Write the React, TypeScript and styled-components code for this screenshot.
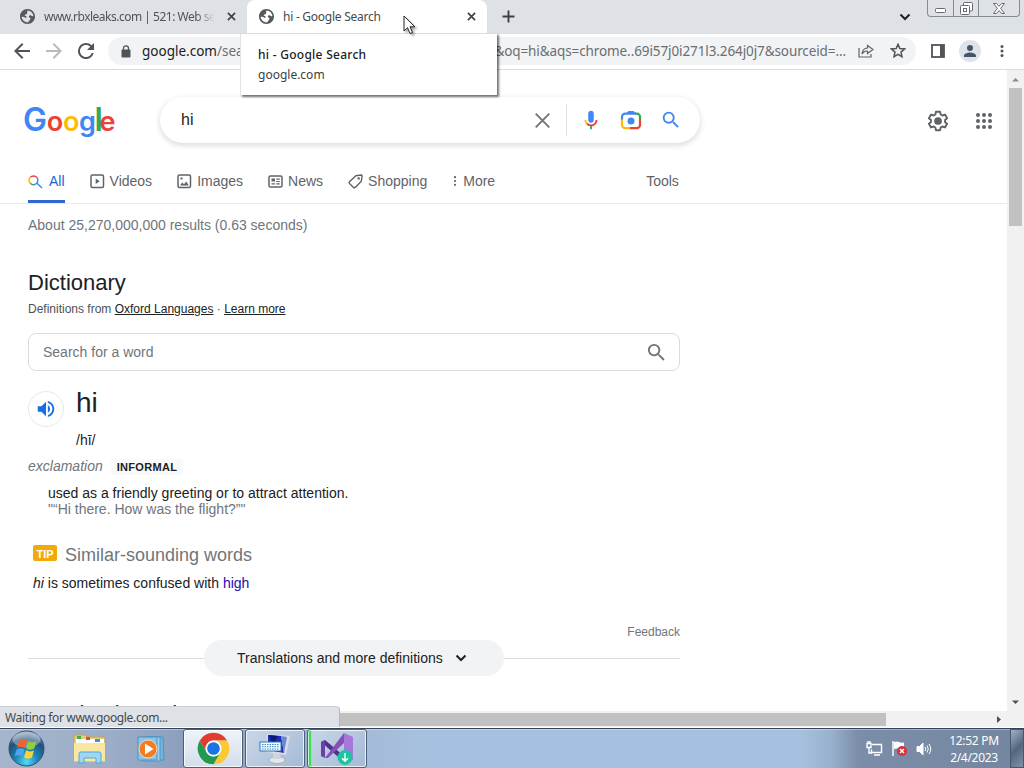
import React from "react";
import styled, { createGlobalStyle } from "styled-components";

const uiFont = `"Noto Sans", "Open Sans", sans-serif`;
const pageFont = `"Liberation Sans", Arial, sans-serif`;

const GlobalStyle = createGlobalStyle`
  * {
    box-sizing: border-box;
  }
  body {
    margin: 0;
    overflow: hidden;
    font-family: ${pageFont};
  }
  svg {
    display: block;
    flex-shrink: 0;
  }
`;

const Screen = styled.div`
  position: relative;
  display: flex;
  flex-direction: column;
  width: 1024px;
  height: 768px;
  overflow: hidden;
  background-color: #fff;
`;

/* ------------- tab strip */

const TabStrip = styled.div`
  display: flex;
  height: 34px;
  padding-left: 8px;
  background-color: #dee1e6;
  font-family: ${uiFont};
`;

const Tab = styled.div<{ $active?: boolean; $width: number }>`
  display: flex;
  align-items: center;
  width: ${(p) => p.$width}px;
  padding: 0 11px 0 12px;
  border-radius: 8px 8px 0 0;
  background-color: ${(p) => (p.$active ? "#fff" : "transparent")};
  color: ${(p) => (p.$active ? "#45494d" : "#50545a")};
`;

const TabTitle = styled.div<{ $fade?: boolean; $spacing: number }>`
  flex: 1;
  margin: 0 9px 0 9px;
  overflow: hidden;
  white-space: nowrap;
  font-size: 12px;
  line-height: 18px;
  letter-spacing: ${(p) => p.$spacing}px;
  mask-image: ${(p) =>
    p.$fade ? "linear-gradient(90deg, #000 88%, transparent 98%)" : "none"};
`;

const NewTab = styled.div`
  padding: 10px 0 0 15px;
`;

const StripRight = styled.div`
  display: flex;
  margin-left: auto;
  padding-right: 4px;
`;

const TabSearch = styled.div`
  padding: 13px 16px 0 0;
`;

const WindowButtons = styled.div`
  display: flex;
  height: 17px;
  border: 1px solid #868b92;
  border-top: none;
  border-radius: 0 0 4px 4px;
`;

const WindowButton = styled.div<{ $width: number }>`
  display: flex;
  align-items: center;
  justify-content: center;
  width: ${(p) => p.$width}px;
  & + & {
    border-left: 1px solid #868b92;
  }
`;

/* ------------- toolbar */

const Toolbar = styled.div`
  display: flex;
  align-items: center;
  height: 37px;
  padding: 0 14px;
  border-bottom: 1px solid #dadce0;
  background-color: #fff;
  font-family: ${uiFont};
`;

const NavIcons = styled.div`
  display: flex;
  gap: 16px;
`;

const AddressBar = styled.div`
  display: flex;
  align-items: center;
  width: 808px;
  height: 28px;
  margin-left: 14px;
  padding: 0 10px 0 13px;
  border-radius: 14px;
  background-color: #f1f3f4;
`;

const Url = styled.div`
  display: flex;
  justify-content: space-between;
  flex: 1;
  margin: 0 12px 0 11px;
  white-space: nowrap;
  font-size: 13.5px;
  color: #6a6e73;
`;

const UrlStart = styled.div`
  letter-spacing: 0;
  span {
    color: #202124;
  }
`;

const UrlEnd = styled.div`
  letter-spacing: -0.1px;
`;

const BarIcons = styled.div`
  display: flex;
  align-items: center;
  gap: 16px;
`;

const ToolbarRight = styled.div`
  display: flex;
  align-items: center;
  gap: 14px;
  padding-left: 15px;
`;

const Avatar = styled.div`
  display: flex;
  align-items: center;
  justify-content: center;
  width: 22px;
  height: 22px;
  margin-right: 5px;
  border-radius: 50%;
  background-color: #dee2ea;
`;

/* ------------- viewport and scrollbars */

const ViewportRow = styled.div`
  display: flex;
  height: 641px;
`;

const Page = styled.div`
  flex: 1;
  padding-top: 1px;
  overflow: hidden;
  background-color: #fff;
`;

const VScroll = styled.div`
  display: flex;
  flex-direction: column;
  align-items: center;
  width: 17px;
  padding-top: 1px;
  background-color: #f1f1f1;
`;

const VThumb = styled.div`
  width: 13px;
  height: 138px;
  background-color: #c1c1c1;
`;

const HScroll = styled.div`
  display: flex;
  align-items: center;
  height: 16px;
  background-color: #f1f1f1;
`;

const HThumb = styled.div`
  width: 869px;
  height: 13px;
  margin-left: 17px;
  background-color: #c1c1c1;
`;

const ArrowBox = styled.div<{ $end?: boolean }>`
  display: flex;
  align-items: center;
  justify-content: center;
  width: 17px;
  height: 17px;
  margin-top: ${(p) => (p.$end ? "auto" : "0")};
`;

const HArrow = styled.div`
  width: 7px;
  margin: 0 22px 0 auto;
`;

/* ------------- search header */

const SearchHeader = styled.div`
  display: flex;
  height: 88px;
  padding: 26px 14px 0 20px;
`;

const SearchBox = styled.div`
  display: flex;
  align-items: center;
  width: 540px;
  height: 46px;
  margin-left: 40px;
  padding: 0 18px 0 21px;
  border-radius: 24px;
  box-shadow: 0 2px 5px 1px rgba(64, 60, 67, 0.16);
`;

const Query = styled.div`
  flex: 1;
  font-size: 16px;
  line-height: 22px;
  color: #222;
`;

const Divider = styled.div`
  width: 1px;
  height: 32px;
  margin: 0 13px 0 15px;
  background-color: #dfe1e5;
`;

const SearchIcons = styled.div`
  display: flex;
  align-items: center;
  gap: 18px;
`;

const HeaderTools = styled.div`
  display: flex;
  align-items: center;
  gap: 26px;
  height: 46px;
  margin-left: auto;
  padding-top: 2px;
`;

const TabsNav = styled.div`
  display: flex;
  height: 45px;
  padding-left: 28px;
  border-bottom: 1px solid #ebebeb;
  font-size: 14px;
`;

const NavItem = styled.div<{ $active?: boolean; $left: number; $gap?: number }>`
  display: flex;
  align-items: center;
  gap: ${(p) => p.$gap ?? 5}px;
  height: 44px;
  padding-top: ${(p) => (p.$active ? 3 : 0)}px;
  margin-left: ${(p) => p.$left}px;
  border-bottom: ${(p) => (p.$active ? "3px solid #2f66cf" : "none")};
  color: ${(p) => (p.$active ? "#1a67d2" : "#5f6368")};
`;

const Stats = styled.div`
  padding-left: 28px;
  font-size: 14px;
  line-height: 43px;
  color: #70757a;
`;

/* ------------- dictionary card */

const Card = styled.div`
  width: 652px;
  margin: 22px 0 0 28px;
  color: #202124;
`;

const Heading = styled.div`
  font-size: 22px;
  line-height: 28px;
`;

const Source = styled.div`
  margin-top: 2px;
  font-size: 12px;
  line-height: 20px;
  color: #4d5156;
  span {
    color: #202124;
    text-decoration: underline;
  }
`;

const WordSearch = styled.div`
  display: flex;
  align-items: center;
  justify-content: space-between;
  height: 38px;
  margin-top: 14px;
  padding: 0 11px 0 14px;
  border: 1px solid #dadce0;
  border-radius: 8px;
  font-size: 14px;
  color: #70757a;
`;

const WordRow = styled.div`
  display: flex;
  margin-top: 17px;
`;

const SpeakerButton = styled.div`
  display: flex;
  align-items: center;
  justify-content: center;
  width: 36px;
  height: 36px;
  margin: 3px 12px 0 0;
  border: 1px solid #e6e8eb;
  border-radius: 50%;
`;

const Word = styled.div`
  font-size: 28px;
  line-height: 30px;
`;

const Phonetic = styled.div`
  margin-top: 14px;
  font-size: 14px;
  line-height: 16px;
`;

const PartOfSpeech = styled.div`
  display: flex;
  align-items: center;
  height: 20px;
  margin-top: 8px;
  font-size: 14px;
  font-style: italic;
  color: #70757a;
`;

const Label = styled.div`
  margin: 2px 0 0 8px;
  padding: 2px 6px;
  border-radius: 3px;
  background-color: #f8f9fa;
  font-size: 11px;
  font-style: normal;
  font-weight: bold;
  letter-spacing: 0.3px;
  color: #202124;
`;

const Definition = styled.div`
  margin: 9px 0 0 20px;
  font-size: 14px;
  line-height: 16px;
`;

const Example = styled.div`
  color: #70757a;
`;

const TipRow = styled.div`
  display: flex;
  align-items: center;
  height: 24px;
  margin: 26px 0 0 5px;
  font-size: 18px;
  color: #70757a;
`;

const Tip = styled.div`
  width: 24px;
  height: 16px;
  margin: -5px 8px 0 0;
  border-radius: 2px;
  background-color: #f2a90a;
  font-size: 11px;
  font-weight: bold;
  line-height: 19px;
  text-align: center;
  color: #fff;
`;

const Confused = styled.div`
  margin: 8px 0 0 5px;
  font-size: 14px;
  line-height: 16px;
  span {
    color: #1a0dab;
  }
`;

const Feedback = styled.div`
  margin-top: 34px;
  font-size: 12px;
  line-height: 15px;
  text-align: right;
  color: #70757a;
`;

const MoreRow = styled.div`
  display: flex;
  align-items: center;
  height: 36px;
  &::before,
  &::after {
    content: "";
    flex: 1;
    height: 1px;
    background-color: #dadce0;
  }
`;

const MoreButton = styled.div`
  display: flex;
  align-items: center;
  gap: 12px;
  width: 300px;
  height: 36px;
  padding-left: 33px;
  border-radius: 18px;
  background-color: #f1f3f4;
  font-size: 14px;
`;

const NextHeading = styled(Heading)`
  margin-top: 24px;
`;

/* ------------- overlays */

const TabTooltip = styled.div`
  position: absolute;
  top: 33px;
  left: 240px;
  width: 257px;
  height: 62px;
  padding: 11px 17px;
  border-top: 1px solid #dadce0;
  border-left: 1px solid #e3e3e3;
  background-color: #fff;
  box-shadow: 2px 2px 2px rgba(0, 0, 0, 0.55);
  font-family: ${uiFont};
  font-size: 12px;
  line-height: 20px;
  color: #3c4043;
`;

const TooltipTitle = styled.div`
  font-weight: 500;
  letter-spacing: 0.27px;
  color: #202124;
`;

const StatusBubble = styled.div`
  position: absolute;
  left: 0;
  top: 706px;
  width: 340px;
  height: 21px;
  padding-left: 5px;
  border-top: 1px solid #ccd0d6;
  border-right: 1px solid #b4b8be;
  border-radius: 0 4px 0 0;
  background-color: #dee1e6;
  font-family: ${uiFont};
  font-size: 12px;
  line-height: 22px;
  letter-spacing: -0.35px;
  color: #45494e;
`;

const Cursor = styled.svg`
  position: absolute;
  left: 403px;
  top: 15px;
  filter: drop-shadow(2px 2px 1px rgba(0, 0, 0, 0.35));
`;

/* ------------- taskbar */

const Taskbar = styled.div`
  display: flex;
  height: 41px;
  padding-top: 1px;
  border-top: 1px solid #fff;
  background: linear-gradient(
    90deg,
    #a5b5cb 0,
    #9badc8 110px,
    #8c9fbc 182px,
    #a4bad8 366px,
    #a6c1df 420px,
    #a6c1df 800px,
    #98b0ce 832px,
    #7b8da8 858px,
    #74869f 1024px
  );
  box-shadow: inset 0 1px 0 #34435a, inset 0 2px 0 rgba(255, 255, 255, 0.35);
`;

const PinnedApps = styled.div`
  display: flex;
  align-items: center;
  width: 183px;
  padding-left: 8px;
`;

const PinnedIcon = styled.div<{ $left: number }>`
  margin-left: ${(p) => p.$left}px;
`;

const TaskButton = styled.div<{ $bright?: boolean; $busy?: boolean }>`
  display: flex;
  align-items: center;
  justify-content: center;
  width: 60px;
  height: 39px;
  margin-right: 2px;
  border: 1px solid #4c5f7b;
  border-radius: 3px;
  background: ${(p) =>
    p.$bright
      ? "linear-gradient(#eef3f9, #d3deec)"
      : "linear-gradient(135deg, #c9d7e8, #a5bad6)"};
  box-shadow: inset 0 0 0 1px rgba(255, 255, 255, 0.75)
    ${(p) => (p.$busy ? ", inset 3px 0 1px #2fe04a" : "")};
`;

const Tray = styled.div`
  display: flex;
  align-items: center;
  margin-left: auto;
  color: #fff;
`;

const TrayIcons = styled.div`
  display: flex;
  align-items: center;
  gap: 8px;
`;

const Clock = styled.div`
  width: 56px;
  margin: 0 8px 0 14px;
  font-family: ${uiFont};
  font-size: 12px;
  line-height: 17px;
  letter-spacing: -0.3px;
  text-align: center;
  white-space: nowrap;
`;

const ShowDesktop = styled.div`
  width: 14px;
  height: 39px;
  border: 1px solid #45566f;
  background: linear-gradient(135deg, #a3b2c8, #54657f 50%, #7f90a8);
`;

/* ------------- icons */

const Globe = () => (
  <svg width="15" height="15" viewBox="2 2 20 20">
    <path
      fill="#55595e"
      d="M12 2C6.48 2 2 6.48 2 12s4.48 10 10 10 10-4.48 10-10S17.52 2 12 2zm7.900 9.200c-1.200.9-2.300.3-3.200-.4-1.100-.8-2.100-.5-2.700.4-.7 1 .2 2 1.300 2.300.9.3.9 1.300.3 2.200-.8 1.200-1.600 3.200-3.300 4.200-4.200-.1-7.600-3.200-8.100-7.100 1.500-.6 3.600-.3 4.500.6.9.8 1.900.5 2.100-.6.2-1.300-.9-1.700-2-1.900-.8-.3-.5-1.500.5-1.700 1.600-.3 2.500-1.200 2.300-2.700-.1-.9.1-1.700.6-2.400 3.900.2 7.100 3.200 7.700 7.100z"
    />
  </svg>
);

const Close = ({ size = 9, color = "#3c4043", width = 1.8 }) => (
  <svg width={size} height={size} viewBox="0 0 10 10">
    <path d="M1 1l8 8M9 1l-8 8" stroke={color} strokeWidth={width} fill="none" />
  </svg>
);

const Chevron = ({ width = 2 }) => (
  <svg width="12" height="8" viewBox="0 0 12 8">
    <path d="M1.5 1.5L6 6l4.500-4.500" stroke="#202124" strokeWidth={width} fill="none" />
  </svg>
);

const Magnifier = ({ size = 24, color = "#4285f4" }) => (
  <svg width={size} height={size} viewBox="0 0 24 24" fill={color}>
    <path d="M15.5 14h-.79l-.28-.27A6.471 6.471 0 0 0 16 9.500 6.500 6.500 0 1 0 9.500 16c1.610 0 3.090-.59 4.230-1.570l.27.28v.79l5 4.990L20.490 19l-4.990-5zm-6 0C7.010 14 5 11.990 5 9.500S7.010 5 9.500 5 14 7.010 14 9.500 11.990 14 9.500 14z" />
  </svg>
);

const Logo = () => (
  <svg width="100" height="46" viewBox="20 97 100 46" fontFamily="Inter, sans-serif" fontWeight="600">
    <text y="130.500">
      <tspan x="23" fontSize="32" fill="#4285f4">G</tspan>
      <tspan x="46.700" fontSize="27" fill="#ea4335">o</tspan>
      <tspan x="62.900" fontSize="27" fill="#fbbc05">o</tspan>
      <tspan x="79" fontSize="27" fill="#4285f4">g</tspan>
      <tspan x="94.500" fontSize="32" fill="#34a853">l</tspan>
      <tspan x="99.500" fontSize="27" fill="#ea4335">e</tspan>
    </text>
  </svg>
);

const Mic = () => (
  <svg width="22" height="22" viewBox="0 0 24 24">
    <path fill="#4285f4" d="M12 15c1.700 0 3-1.300 3-3V5c0-1.700-1.300-3-3-3S9 3.300 9 5v7c0 1.700 1.300 3 3 3z" />
    <path fill="#34a853" d="M11 18.100h2V22h-2z" />
    <path fill="#fbbc04" d="M7.050 16.870C5.780 15.600 5 13.900 5 12h2c0 1.400.56 2.420 1.460 3.320z" />
    <path fill="#ea4335" d="M12 16.930a4.970 4.970 0 0 1-3.540-1.550l-1.410 1.490A6.900 6.900 0 0 0 12 18.930c3.870 0 6.990-2.920 6.990-6.930h-1.990c0 2.920-2.240 4.930-5 4.930z" />
  </svg>
);

const Lens = () => (
  <svg width="22" height="22" viewBox="0 0 22 22" fill="none" strokeWidth="2.200">
    <path fill="#4285f4" d="M6 4.800L8.500 2h5L16 4.800z" />
    <path stroke="#4285f4" d="M2 11V7.800a3.200 3.200 0 0 1 3.200-3.200H16" />
    <path stroke="#34a853" d="M15 4.600h1.800A3.200 3.200 0 0 1 20 7.800V10" />
    <path stroke="#ea4335" d="M20 10v6a3.200 3.200 0 0 1-3.200 3.200H10" />
    <path stroke="#fbbc04" d="M2 10.500V16a3.200 3.200 0 0 0 3.200 3.200H10" />
    <circle cx="11" cy="12" r="3.500" fill="#4285f4" />
  </svg>
);

const Gear = () => (
  <svg width="22" height="22" viewBox="0 0 24 24">
    <path
      fill="none"
      stroke="#5f6368"
      strokeWidth="2.100"
      strokeLinejoin="round"
      d="M9.700 2h4.600l.6 2.900 1.900 1.100 2.800-1 2.300 4-2.200 1.900v2.200l2.200 1.900-2.300 4-2.800-1-1.900 1.100-.6 2.900H9.700l-.6-2.900L7.200 18l-2.800 1-2.300-4 2.200-1.900v-2.200L2.100 9l2.300-4 2.800 1 1.900-1.100z"
    />
    <circle cx="12" cy="12" r="4.200" fill="#5f6368" />
  </svg>
);

const AppsGrid = () => (
  <svg width="18" height="18" viewBox="0 0 18 18" fill="#5f6368">
    {[3, 9, 15].map((y) =>
      [3, 9, 15].map((x) => <circle key={`${x}-${y}`} cx={x} cy={y} r="2" />)
    )}
  </svg>
);

const AllIcon = () => (
  <svg width="15" height="15" viewBox="0 0 15 15" fill="none" strokeWidth="1.500">
    <path stroke="#ea4335" d="M2.300 3.300a4.500 4.500 0 0 1 6.400 0" />
    <path stroke="#fbbc04" d="M2.300 3.300a4.500 4.500 0 0 0 0 6" />
    <path stroke="#34a853" d="M2.300 9.300a4.500 4.500 0 0 0 4 1.500" />
    <path stroke="#4285f4" d="M8.700 3.300a4.500 4.500 0 0 1-2.600 7.500M9 9.300l5 4.700" />
  </svg>
);

const VideoIcon = () => (
  <svg width="15" height="15" viewBox="0 0 15 15">
    <rect x="1" y="1" width="12.500" height="12.500" rx="1.500" fill="none" stroke="#5f6368" strokeWidth="1.500" />
    <path d="M5.700 4.500v5.500l4-2.750z" fill="#5f6368" />
  </svg>
);

const ImageIcon = () => (
  <svg width="15" height="15" viewBox="0 0 15 15">
    <rect x="1" y="1" width="12.500" height="12.500" rx="1.500" fill="none" stroke="#5f6368" strokeWidth="1.500" />
    <path d="M3 11.500l2.200-3 1.800 1.700L9.300 7.500l2.500 4zM3.500 3.500h2v2h-2z" fill="#5f6368" />
  </svg>
);

const NewsIcon = () => (
  <svg width="15" height="13" viewBox="0 0 15 13">
    <rect x="1" y="1" width="13" height="11" rx="1.500" fill="none" stroke="#5f6368" strokeWidth="1.500" />
    <path d="M3.500 3.500h3.500v3h-3.500zM8.300 3.500h3.500v1.200H8.300zM8.300 5.900h3.500v1.200H8.300zM3.500 8.200h3.500v1.300h-3.500zM8.300 8.200h3.500v1.300H8.300z" fill="#5f6368" />
  </svg>
);

const TagIcon = () => (
  <svg width="15" height="15" viewBox="0 0 15 15">
    <path d="M7.800 1.700L13.200 1q.9 0 .9.900L13.300 7.300 7.200 13.400q-.9.700-1.700 0L1.500 9.500q-.7-.9 0-1.700z" fill="none" stroke="#5f6368" strokeWidth="1.400" strokeLinejoin="round" />
    <circle cx="10.700" cy="4.400" r="1.200" fill="#5f6368" />
  </svg>
);

const Dots = ({ size = 14, color = "#5f6368", r = 1.3 }) => (
  <svg width="4" height={size} viewBox="0 0 4 14" fill={color}>
    <circle cx="2" cy="2.500" r={r} />
    <circle cx="2" cy="7" r={r} />
    <circle cx="2" cy="11.500" r={r} />
  </svg>
);

const Speaker = () => (
  <svg width="22" height="22" viewBox="0 0 24 24">
    <path
      fill="#1a6fe0"
      d="M3 9v6h4l5 5V4L7 9H3zm13.500 3A4.500 4.500 0 0 0 14 7.970v8.050A4.500 4.500 0 0 0 16.500 12zM14 3.230v2.060c2.890.86 5 3.540 5 6.710s-2.110 5.850-5 6.710v2.060c4.010-.91 7-4.490 7-8.770s-2.990-7.860-7-8.770z"
    />
  </svg>
);

const Triangle = ({ dir, color = "#505050" }: { dir: "up" | "down" | "right"; color?: string }) => {
  const d = {
    up: "M0 5.500L3.500 2 7 5.500z",
    down: "M0 1.500L3.500 5 7 1.500z",
    right: "M2 0l4 3.500L2 7z",
  }[dir];
  return (
    <svg width="7" height="7" viewBox="0 0 7 7" fill={color}>
      <path d={d} />
    </svg>
  );
};

const StartOrb = () => (
  <svg width="37" height="37" viewBox="0 0 37 37">
    <defs>
      <radialGradient id="orb" cx="50%" cy="88%" r="80%">
        <stop offset="0" stopColor="#54dcf2" />
        <stop offset="0.4" stopColor="#1a86b8" />
        <stop offset="0.8" stopColor="#214f7c" />
        <stop offset="1" stopColor="#7794b2" />
      </radialGradient>
    </defs>
    <circle cx="18.500" cy="18.500" r="17.500" fill="url(#orb)" stroke="#31506f" />
    <ellipse cx="18.500" cy="9.500" rx="14" ry="8" fill="#fff" opacity="0.35" />
    <path d="M11 10.500q4-2.500 8 0l-2 7.500q-4-2.300-8 0z" fill="#f0642b" />
    <path d="M20.300 11.300q4 2.300 8-.3l-2 7.500q-4 2.300-8 .2z" fill="#9acb3c" />
    <path d="M8.600 19.500q4-2.300 8 0l-2 7q-4-2.300-8 0z" fill="#4fa3e8" />
    <path d="M18 20.300q4 2.300 8-.1l-2 7.300q-4 2.300-8 0z" fill="#fdd13a" />
  </svg>
);

const Folder = () => (
  <svg width="34" height="30" viewBox="0 0 34 30">
    <path d="M1 3q0-2 2-2h9l2 2h16q2 0 2 2v22H1z" fill="#e8cd78" stroke="#c5a44b" />
    <path d="M3 5h28v5H3z" fill="#fff" />
    <path d="M4 2h4v3H4z" fill="#3fae49" />
    <path d="M13 3h4v3h-4z" fill="#d9533b" />
    <path d="M22 5h5v3h-5z" fill="#3e92d2" />
    <path d="M1 9h31v18.500H1z" fill="#f8e7a1" />
    <path d="M6 29V20q0-2 2-2h18q2 0 2 2v9h-5v-5H11v5z" fill="#9fd6f3" stroke="#52a6d6" />
  </svg>
);

const MediaPlayer = () => (
  <svg width="28" height="26" viewBox="0 0 28 26">
    <path d="M8 1h18l1 23H8z" fill="#75b5de" stroke="#4c93c4" />
    <path d="M5 1h18v24H5z" fill="#a3d2ee" stroke="#4c93c4" />
    <path d="M1 1h19v23H1z" fill="#8cc5e8" stroke="#4c93c4" />
    <circle cx="11" cy="13" r="9" fill="#f07d22" stroke="#fbd7b0" />
    <path d="M8 7.500v11l8.500-5.500z" fill="#fff" />
  </svg>
);

const Chrome = () => (
  <svg width="33" height="33" viewBox="0 0 48 48">
    <path d="M4.080 12.500A23 23 0 0 1 43.920 12.500H24A11.500 11.500 0 0 0 14.040 29.750z" fill="#e33b2e" />
    <path d="M43.920 12.500A23 23 0 0 1 24 47l9.960-17.250A11.500 11.500 0 0 0 24 12.500z" fill="#fcc934" />
    <path d="M24 47A23 23 0 0 1 4.080 12.500l9.960 17.250A11.500 11.500 0 0 0 33.960 29.750z" fill="#219a4f" />
    <circle cx="24" cy="24" r="11.500" fill="#fff" />
    <circle cx="24" cy="24" r="9.200" fill="#1a73e8" />
  </svg>
);

const Computer = () => (
  <svg width="32" height="32" viewBox="0 0 32 32">
    <ellipse cx="18" cy="27" rx="8" ry="3.500" fill="#e4e7eb" stroke="#a9b0b8" />
    <path d="M14 19h7l1 7h-8z" fill="#cfd4da" />
    <path d="M8 1l23 2-4 19-20-3z" fill="#d8dde3" />
    <path d="M9 2l13 1 3 17-16-3z" fill="#1b2fb4" />
    <path d="M10 2l9 1-5 8z" fill="#0b1a78" />
    <path d="M22 3l6 1-3 16z" fill="#6c86dc" />
    <rect x="1" y="9" width="21" height="9" fill="#f4f8fc" stroke="#2d7bb8" />
    <path d="M3 11.500h17M3 13.700h17M3 16h17" stroke="#3d8cc8" strokeDasharray="1.500 1" />
  </svg>
);

const VisualStudio = () => (
  <svg width="34" height="34" viewBox="0 0 34 34">
    <path d="M1 10l4-2 19 16v6z" fill="#52308c" />
    <path d="M1 10v14l4 2V8z" fill="#6b40a8" />
    <path d="M5 26L24 1l1 9L8 26z" fill="#8450b8" />
    <path d="M24 1l9 4v23l-9 4z" fill="#a678dc" />
    <circle cx="25" cy="25.500" r="7.500" fill="#1cc5a0" />
    <path d="M25 21v8M22 26.200l3 3 3-3" stroke="#fff" strokeWidth="1.500" fill="none" />
  </svg>
);

const NetworkIcon = () => (
  <svg width="17" height="15" viewBox="0 0 17 15" fill="none" stroke="#fff">
    <path d="M6 3.500h9.500v8H5.500v-3M8 14h6M1 2.500h4v4H1zM2 0v2M4 0v2M3 6.500V12h3" strokeWidth="1.400" />
  </svg>
);

const FlagIcon = () => (
  <svg width="17" height="17" viewBox="0 0 17 17">
    <path d="M2 1v15" stroke="#fff" strokeWidth="1.500" />
    <path d="M3 2q3-1 5 0t5 .5v7q-3 0-5-.7T3 9z" fill="#fff" />
    <circle cx="11" cy="11" r="5" fill="#d8303a" />
    <path d="M9 9l4 4M13 9l-4 4" stroke="#fff" strokeWidth="1.500" />
  </svg>
);

const VolumeIcon = () => (
  <svg width="16" height="16" viewBox="0 0 16 16" fill="none" stroke="#fff">
    <path d="M1 5.500h2.500L7 2v12l-3.500-3.500H1z" fill="#fff" />
    <path d="M9 6q1.500 2 0 4M11 4.500q2.500 3.500 0 7M13 3q3.500 5 0 10" />
  </svg>
);

const BrowserTop = () => (
  <>
    <TabStrip>
      <Tab $width={239}>
        <Globe />
        <TabTitle $fade $spacing={-0.5}>www.rbxleaks.com | 521: Web ser</TabTitle>
        <Close />
      </Tab>
      <Tab $active $width={240}>
        <Globe />
        <TabTitle $spacing={-0.25}>hi - Google Search</TabTitle>
        <Close />
      </Tab>
      <NewTab>
        <svg width="13" height="13" viewBox="0 0 13 13">
          <path d="M6.500 .5v12M.5 6.500h12" stroke="#3c4043" strokeWidth="1.900" />
        </svg>
      </NewTab>
      <StripRight>
        <TabSearch>
          <Chevron />
        </TabSearch>
        <WindowButtons>
          <WindowButton $width={25}>
            <svg width="12" height="16" viewBox="0 0 12 16">
              <rect x="0.500" y="8.500" width="10" height="4" rx="1" fill="#fff" stroke="#666b72" />
            </svg>
          </WindowButton>
          <WindowButton $width={25}>
            <svg width="13" height="13" viewBox="0 0 13 13" fill="#fff" stroke="#666b72">
              <rect x="3.500" y="0.500" width="9" height="8.500" rx="1" />
              <rect x="0.500" y="3.500" width="9" height="9" rx="1" />
              <rect x="3.500" y="6.500" width="3" height="3" />
            </svg>
          </WindowButton>
          <WindowButton $width={41}>
            <svg width="12" height="11" viewBox="0 0 12 11">
              <path d="M.5.500h3L6 3.300 8.500.500h3L7.700 5.300l3.800 5.200h-3L6 7.500 3.500 10.500h-3l3.800-5.200z" fill="#fff" stroke="#666b72" />
            </svg>
          </WindowButton>
        </WindowButtons>
      </StripRight>
    </TabStrip>
    <Toolbar>
      <NavIcons>
        <svg width="16" height="16" viewBox="4 4 16 16" fill="#50545a">
          <path d="M20 11H7.830l5.590-5.590L12 4l-8 8 8 8 1.410-1.410L7.830 13H20v-2z" />
        </svg>
        <svg width="16" height="16" viewBox="4 4 16 16" fill="#b8babd">
          <path d="M12 4l-1.410 1.410L16.170 11H4v2h12.170l-5.580 5.590L12 20l8-8z" />
        </svg>
        <svg width="16" height="16" viewBox="4 4 16 16" fill="#50545a">
          <path d="M17.650 6.350A7.958 7.958 0 0 0 12 4a8 8 0 1 0 7.730 10h-2.080A5.990 5.990 0 0 1 12 18c-3.310 0-6-2.690-6-6s2.690-6 6-6c1.660 0 3.140.69 4.220 1.780L13 11h7V4l-2.350 2.350z" />
        </svg>
      </NavIcons>
      <AddressBar>
        <svg width="10" height="13" viewBox="0 0 10 13">
          <rect x="0.500" y="4.500" width="9" height="8" rx="1" fill="#50545a" />
          <path d="M2.500 5V3.300a2.500 2.500 0 0 1 5 0V5" fill="none" stroke="#50545a" strokeWidth="1.300" />
        </svg>
        <Url>
          <UrlStart>
            <span>google.com</span>/search
          </UrlStart>
          <UrlEnd>&amp;oq=hi&amp;aqs=chrome..69i57j0i271l3.264j0j7&amp;sourceid=...</UrlEnd>
        </Url>
        <BarIcons>
          <svg width="16" height="14" viewBox="0 0 16 14" fill="none" stroke="#5f6368" strokeWidth="1.200">
            <path d="M1 4v9h12V10" />
            <path d="M9.500 1.500l5.500 4-5.500 4V7Q5.500 6.800 4 10 4.300 4.500 9.500 4z" />
          </svg>
          <svg width="16" height="16" viewBox="1.500 0.500 16 16">
            <path d="M9.500 1.800l1.800 4.300 4.700.4-3.500 3.100 1 4.600-4-2.400-4 2.400 1-4.600L3 6.500l4.700-.4z" fill="none" stroke="#50545a" strokeWidth="1.500" />
          </svg>
        </BarIcons>
      </AddressBar>
      <ToolbarRight>
        <svg width="14" height="14" viewBox="0 0 14 14">
          <rect x="1" y="1" width="12" height="12" fill="none" stroke="#50545a" strokeWidth="1.800" />
          <path d="M9 1h4v12H9z" fill="#50545a" />
        </svg>
        <Avatar>
          <svg width="12" height="12" viewBox="4 4 16 16" fill="#46546a">
            <path d="M12 12a4 4 0 1 0 0-8 4 4 0 0 0 0 8zm0 2c-2.670 0-8 1.340-8 4v2h16v-2c0-2.660-5.330-4-8-4z" />
          </svg>
        </Avatar>
        <Dots color="#50545a" r={1.500} />
      </ToolbarRight>
    </Toolbar>
  </>
);

const App = () => {
  return (
    <Screen>
      <GlobalStyle />
      <BrowserTop />

      <ViewportRow>
        <Page>
          <SearchHeader>
            <Logo />
            <SearchBox>
              <Query>hi</Query>
              <Close size={17} color="#70757a" width={1.1} />
              <Divider />
              <SearchIcons>
                <Mic />
                <Lens />
                <Magnifier size={22} />
              </SearchIcons>
            </SearchBox>
            <HeaderTools>
              <Gear />
              <AppsGrid />
            </HeaderTools>
          </SearchHeader>

          <TabsNav>
            <NavItem $active $left={0} $gap={6}>
              <AllIcon />
              All
            </NavItem>
            <NavItem $left={25}>
              <VideoIcon />
              Videos
            </NavItem>
            <NavItem $left={25}>
              <ImageIcon />
              Images
            </NavItem>
            <NavItem $left={25}>
              <NewsIcon />
              News
            </NavItem>
            <NavItem $left={25}>
              <TagIcon />
              Shopping
            </NavItem>
            <NavItem $left={26} $gap={6}>
              <Dots size={12} />
              More
            </NavItem>
            <NavItem $left={151}>Tools</NavItem>
          </TabsNav>

          <Stats>About 25,270,000,000 results (0.63 seconds)</Stats>

          <Card>
            <Heading>Dictionary</Heading>
            <Source>
              Definitions from <span>Oxford Languages</span> · <span>Learn more</span>
            </Source>
            <WordSearch>
              Search for a word
              <Magnifier size={23} color="#70757a" />
            </WordSearch>

            <WordRow>
              <SpeakerButton>
                <Speaker />
              </SpeakerButton>
              <div>
                <Word>hi</Word>
                <Phonetic>/hī/</Phonetic>
              </div>
            </WordRow>
            <PartOfSpeech>
              exclamation
              <Label>INFORMAL</Label>
            </PartOfSpeech>
            <Definition>
              used as a friendly greeting or to attract attention.
              <Example>"“Hi there. How was the flight?”"</Example>
            </Definition>

            <TipRow>
              <Tip>TIP</Tip>
              Similar-sounding words
            </TipRow>
            <Confused>
              <i>hi</i> is sometimes confused with <span>high</span>
            </Confused>

            <Feedback>Feedback</Feedback>
            <MoreRow>
              <MoreButton>
                Translations and more definitions
                <Chevron />
              </MoreButton>
            </MoreRow>
            <NextHeading>People also ask</NextHeading>
          </Card>
        </Page>
        <VScroll>
          <ArrowBox>
            <Triangle dir="up" color="#8b8b8b" />
          </ArrowBox>
          <VThumb />
          <ArrowBox $end>
            <Triangle dir="down" />
          </ArrowBox>
        </VScroll>
      </ViewportRow>
      <HScroll>
        <HThumb />
        <HArrow>
          <Triangle dir="right" />
        </HArrow>
      </HScroll>

      <Taskbar>
        <PinnedApps>
          <StartOrb />
          <PinnedIcon $left={28}>
            <Folder />
          </PinnedIcon>
          <PinnedIcon $left={30}>
            <MediaPlayer />
          </PinnedIcon>
        </PinnedApps>
        <TaskButton $bright>
          <Chrome />
        </TaskButton>
        <TaskButton>
          <Computer />
        </TaskButton>
        <TaskButton $busy>
          <VisualStudio />
        </TaskButton>
        <Tray>
          <TrayIcons>
            <NetworkIcon />
            <FlagIcon />
            <VolumeIcon />
          </TrayIcons>
          <Clock>
            12:52 PM
            <br />
            2/4/2023
          </Clock>
          <ShowDesktop />
        </Tray>
      </Taskbar>

      <StatusBubble>Waiting for www.google.com...</StatusBubble>
      <TabTooltip>
        <TooltipTitle>hi - Google Search</TooltipTitle>
        google.com
      </TabTooltip>
      <Cursor width="13" height="20" viewBox="0 0 13 20">
        <path d="M1 1v15l3.500-3.300L7 18.500l2.500-1.100L7 11.800h4.800z" fill="#fff" stroke="#222" />
      </Cursor>
    </Screen>
  );
};

export default App;
